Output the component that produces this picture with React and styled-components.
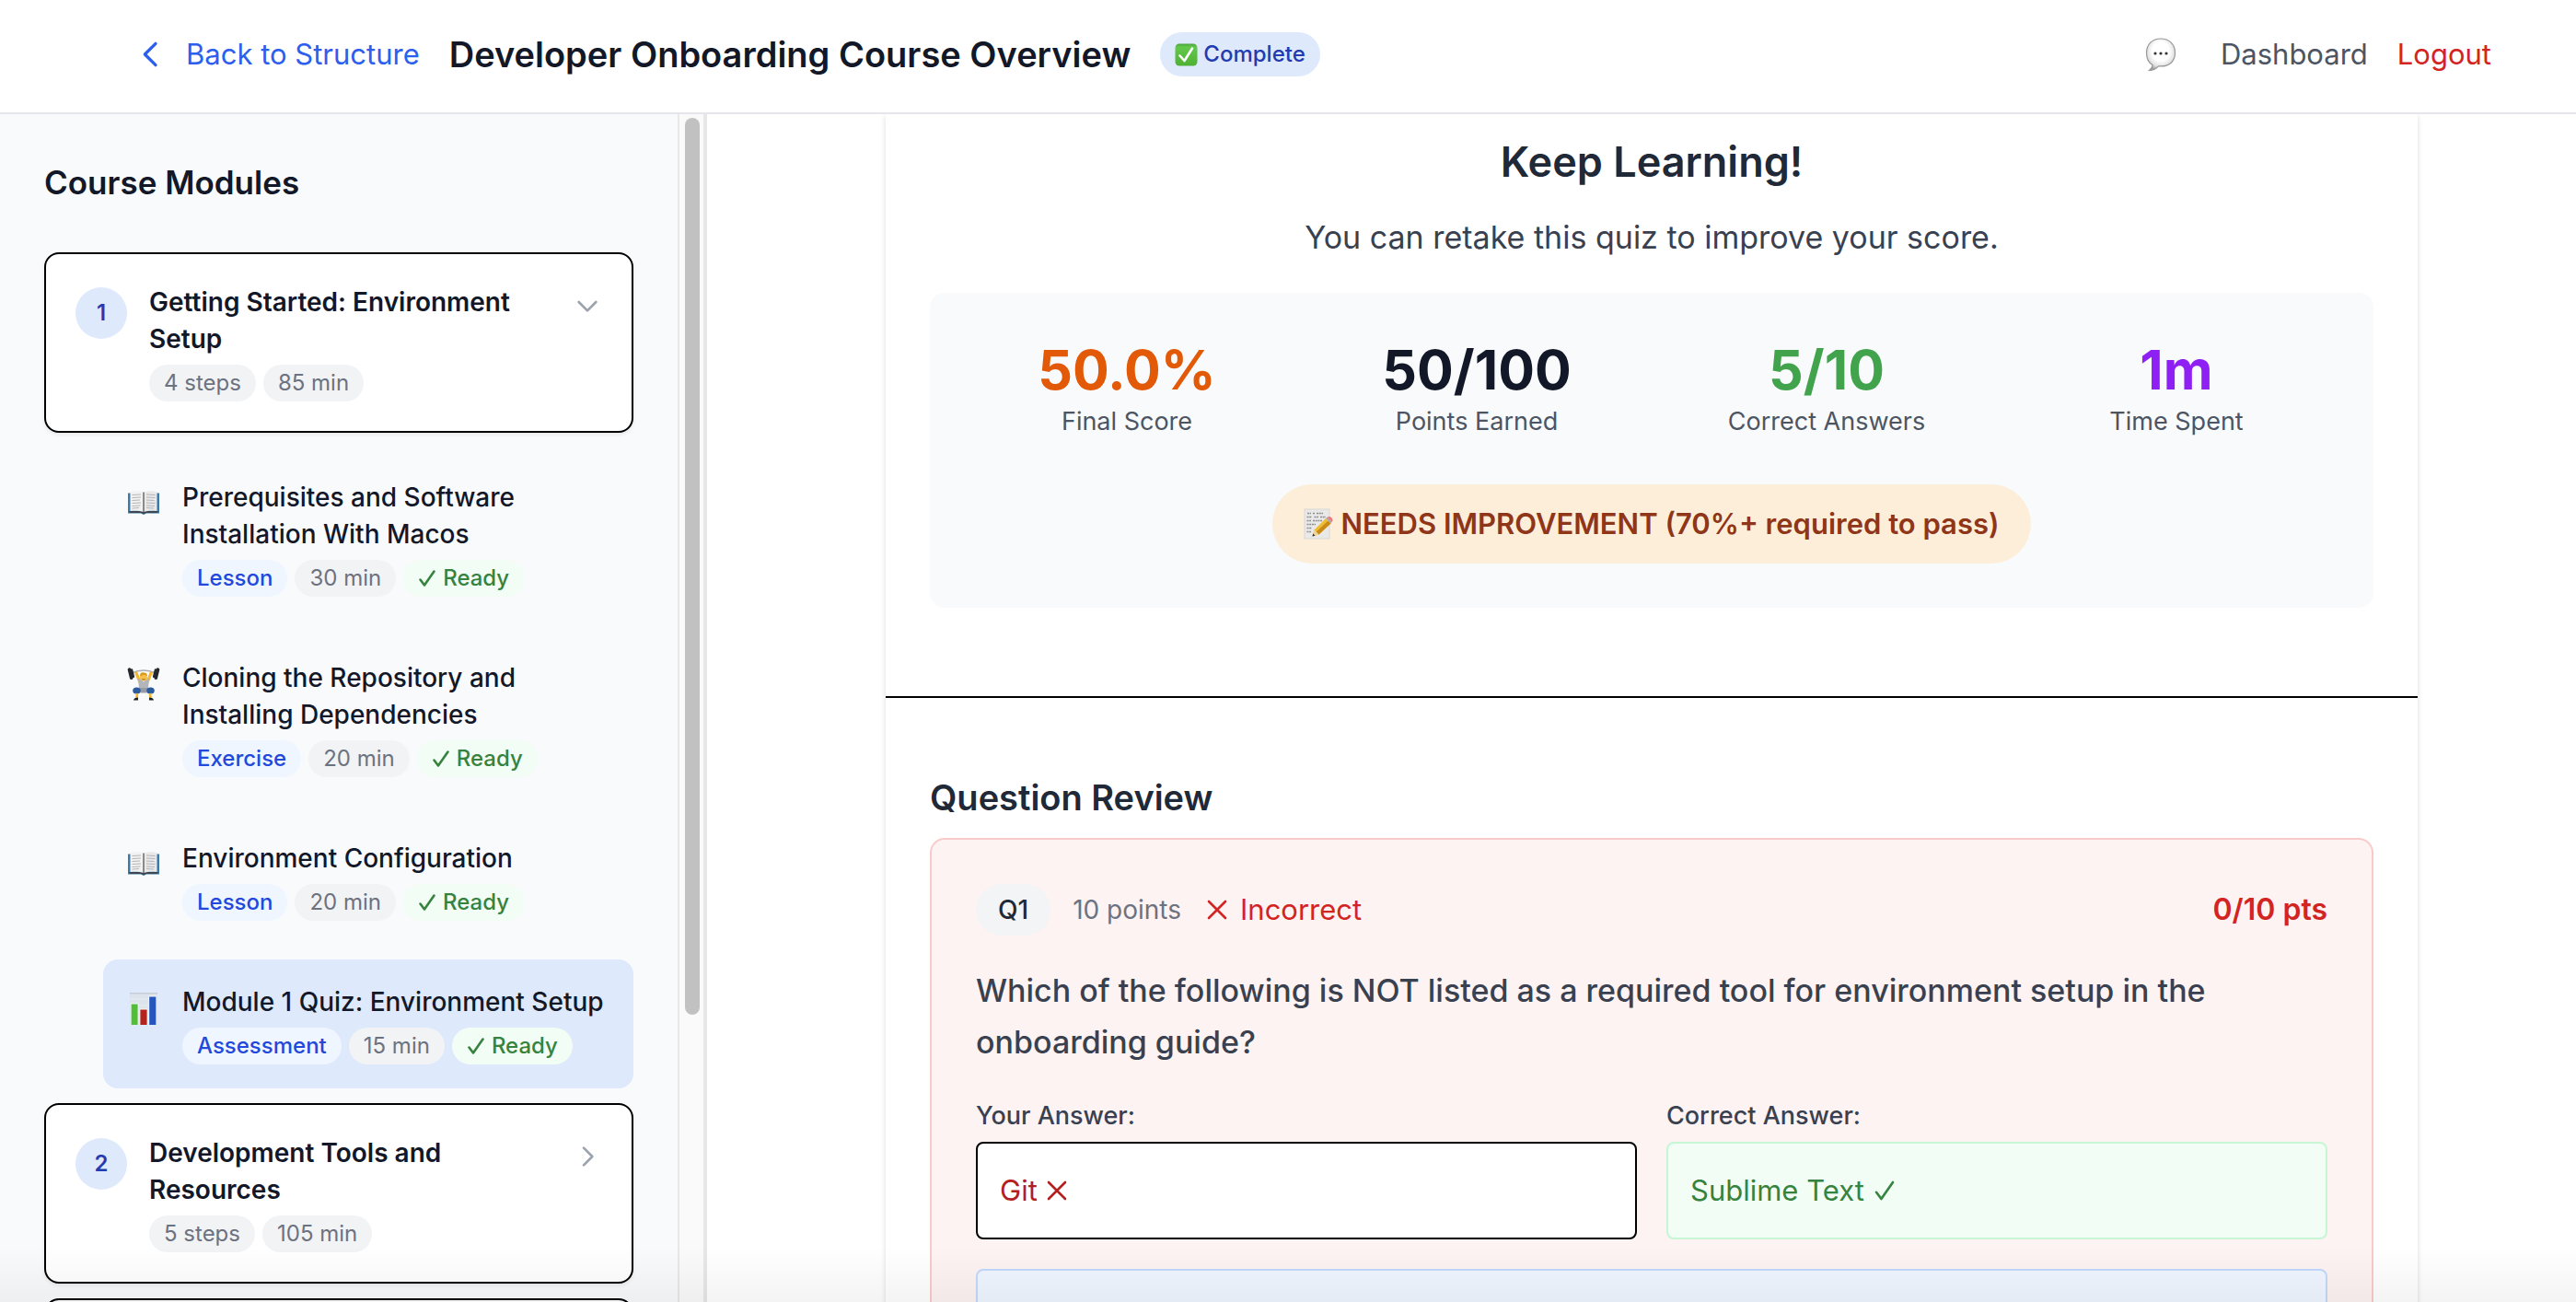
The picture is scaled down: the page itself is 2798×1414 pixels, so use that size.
import React from "react";
import styled, { createGlobalStyle } from "styled-components";

const GlobalStyle = createGlobalStyle`
  *, *::before, *::after { box-sizing: border-box; }
  body { margin: 0; background: #fff; }
  body, button { font-family: Inter, "Liberation Sans", sans-serif; }
  h1, h2, h3, h4, p, ul, ol, dl, dd { margin: 0; padding: 0; }
  ul, ol { list-style: none; }
`;

const c = {
  ink: "#121828",
  heading: "#1f2937",
  body: "#394150",
  soft: "#4c5563",
  muted: "#6c7280",
  faint: "#9ca3af",
  line: "#e5e6eb",
  panel: "#f9fafc",
  chip: "#f2f3f5",
  blue: "#2c5fee",
  blueText: "#2248dc",
  blueDeep: "#223cb0",
  blueBg: "#dee9fc",
  bluePale: "#eff6ff",
  green: "#36833f",
  greenPale: "#f2fdf5",
  red: "#d32424",
};

const Page = styled.div`
  height: 100vh;
  display: flex;
  flex-direction: column;
  overflow: hidden;
  color: ${c.ink};
`;

const Header = styled.header`
  flex: none;
  height: 124px;
  padding: 0 92px 4px 144px;
  display: flex;
  align-items: center;
  justify-content: space-between;
  border-bottom: 2px solid ${c.line};
  background: #fff;
`;

const HeaderGroup = styled.div`
  display: flex;
  align-items: center;
  gap: 32px;
`;

const BackLink = styled.a`
  display: flex;
  align-items: center;
  gap: 18px;
  font-size: 31px;
  line-height: 48px;
  color: ${c.blue};
  text-decoration: none;
`;

const CourseTitle = styled.h1`
  font-size: 38px;
  line-height: 56px;
  font-weight: 600;
`;

const StatusBadge = styled.span`
  display: flex;
  align-items: center;
  gap: 6px;
  padding: 4px 16px;
  border-radius: 24px;
  background: ${c.blueBg};
  color: ${c.blueDeep};
  font-size: 24px;
  line-height: 40px;
  font-weight: 500;
`;

const IconButton = styled.button`
  display: flex;
  padding: 0;
  margin-right: 16px;
  border: 0;
  background: none;
`;

const NavLink = styled.a`
  font-size: 31px;
  line-height: 48px;
  color: ${(p) => (p.$danger ? c.red : c.soft)};
  text-decoration: none;
`;

const Body = styled.div`
  flex: 1;
  min-height: 0;
  display: flex;
`;

const Sidebar = styled.aside`
  flex: none;
  width: 768px;
  display: flex;
  border-right: 4px solid #e7e7e9;
  background: ${c.panel};
`;

const SidebarContent = styled.div`
  flex: 1;
  padding: 48px;
  overflow: hidden;
`;

const ScrollTrack = styled.div`
  flex: none;
  width: 28px;
  padding: 4px 4px 4px 6px;
  border-left: 2px solid #e8e8e8;
  background: #fafafa;
`;

const ScrollThumb = styled.div`
  width: 16px;
  height: 76%;
  border-radius: 8px;
  background: #c1c1c1;
`;

const SidebarTitle = styled.h2`
  margin-bottom: 50px;
  font-size: 35px;
  line-height: 52px;
  font-weight: 600;
`;

const ModuleList = styled.ol`
  display: flex;
  flex-direction: column;
  gap: 16px;
`;

const ModuleButton = styled.button`
  width: 100%;
  display: flex;
  align-items: flex-start;
  gap: 24px;
  padding: 32px;
  border: 2px solid #000;
  border-radius: 16px;
  background: #fff;
  box-shadow: 0 2px 4px rgba(0, 0, 0, 0.08);
  color: inherit;
  text-align: left;
`;

const ModuleNumber = styled.span`
  flex: none;
  width: 56px;
  height: 56px;
  margin-top: 4px;
  border-radius: 50%;
  background: ${c.blueBg};
  color: ${c.blueDeep};
  font-size: 24px;
  line-height: 56px;
  font-weight: 600;
  text-align: center;
`;

const EntryText = styled.span`
  flex: 1;
  min-width: 0;
  display: flex;
  flex-direction: column;
  gap: 8px;
`;

const EntryTitle = styled.span`
  font-size: 28px;
  line-height: 40px;
  font-weight: ${(p) => (p.$strong ? 600 : 500)};
`;

const Chips = styled.span`
  display: flex;
  gap: 8px;
`;

const chipTones = {
  neutral: [c.chip, c.muted, 400],
  kind: [c.bluePale, c.blueText, 500],
  ready: [c.greenPale, c.green, 500],
};

const Chip = styled.span`
  display: flex;
  align-items: center;
  gap: 7px;
  padding: 0 16px;
  border-radius: 20px;
  background: ${(p) => chipTones[p.$tone][0]};
  color: ${(p) => chipTones[p.$tone][1]};
  font-size: 24px;
  line-height: 40px;
  font-weight: ${(p) => chipTones[p.$tone][2]};
`;

const ChevronSlot = styled.span`
  flex: none;
  display: flex;
  margin-top: 8px;
`;

const StepList = styled.ul`
  display: flex;
  flex-direction: column;
  gap: 16px;
  margin-top: 24px;
  padding-left: 64px;
`;

const StepLink = styled.a`
  display: flex;
  align-items: flex-start;
  gap: 24px;
  padding: 26px;
  border-radius: 16px;
  background: ${(p) => (p.$active ? c.blueBg : "transparent")};
  color: inherit;
  text-decoration: none;
`;

const StepIcon = styled.span`
  flex: none;
  display: flex;
  margin-top: 8px;
`;

const Main = styled.main`
  flex: 1;
  min-width: 0;
  padding-left: 22px;
  overflow: hidden;
`;

const QuizCard = styled.article`
  max-width: 1664px;
  margin: 0 auto;
  background: #fff;
  box-shadow: 0 2px 6px rgba(0, 0, 0, 0.14);
`;

const Summary = styled.section`
  padding: 20px 48px 96px;
  border-bottom: 2px solid #000;
`;

const SummaryTitle = styled.h2`
  font-size: 45px;
  line-height: 64px;
  font-weight: 600;
  color: ${c.heading};
  text-align: center;
`;

const SummaryNote = styled.p`
  margin: 22px 0 32px;
  font-size: 34px;
  line-height: 56px;
  color: ${c.body};
  text-align: center;
`;

const ScorePanel = styled.div`
  padding: 48px;
  display: flex;
  flex-direction: column;
  align-items: center;
  gap: 48px;
  border-radius: 16px;
  background: ${c.panel};
`;

const Stats = styled.dl`
  width: 100%;
  display: grid;
  grid-template-columns: repeat(4, 1fr);
  gap: 48px;
  text-align: center;
`;

const Stat = styled.div`
  display: flex;
  flex-direction: column-reverse;
`;

const StatValue = styled.dd`
  font-size: 59px;
  line-height: 72px;
  font-weight: 700;
  color: ${(p) => p.$color};
`;

const StatLabel = styled.dt`
  font-size: 27px;
  line-height: 40px;
  color: ${c.soft};
`;

const Verdict = styled.p`
  display: flex;
  align-items: center;
  gap: 8px;
  padding: 15px 34px;
  border-radius: 43px;
  background: #fdeeda;
  color: #8f3518;
  font-size: 31px;
  line-height: 56px;
  font-weight: 600;
`;

const Review = styled.section`
  padding: 80px 48px 48px;
`;

const ReviewTitle = styled.h3`
  margin-bottom: 16px;
  font-size: 38px;
  line-height: 56px;
  font-weight: 600;
  color: ${c.heading};
`;

const QuestionCard = styled.div`
  padding: 48px;
  display: flex;
  flex-direction: column;
  gap: 32px;
  border: 2px solid #f9caca;
  border-radius: 16px;
  background: #fdf3f2;
`;

const QuestionMeta = styled.div`
  display: flex;
  align-items: center;
  gap: 24px;
  font-size: 28px;
  line-height: 56px;
  color: ${c.muted};
`;

const QuestionNumber = styled.span`
  padding: 0 24px;
  border-radius: 28px;
  background: #f2f4f6;
  color: ${c.heading};
  font-weight: 500;
`;

const Result = styled.span`
  display: flex;
  align-items: center;
  gap: 14px;
  padding-left: 4px;
  font-size: 31px;
  color: ${c.red};
`;

const Points = styled.strong`
  margin-left: auto;
  font-size: 32px;
  font-weight: 600;
  color: ${c.red};
`;

const QuestionText = styled.h4`
  font-size: 34px;
  line-height: 56px;
  font-weight: 500;
  color: ${c.body};
`;

const Answers = styled.dl`
  display: grid;
  grid-template-columns: 1fr 1fr;
  gap: 32px;
`;

const AnswerLabel = styled.dt`
  margin-bottom: 8px;
  font-size: 27px;
  line-height: 40px;
  font-weight: 500;
  color: ${c.body};
`;

const AnswerBox = styled.dd`
  display: flex;
  align-items: center;
  gap: 10px;
  padding: 24px;
  border: 2px solid ${(p) => (p.$correct ? "#c6f6d3" : "#000")};
  border-radius: 8px;
  background: ${(p) => (p.$correct ? c.greenPale : "#fff")};
  color: ${(p) => (p.$correct ? c.green : "#b32020")};
  font-size: 31px;
  line-height: 54px;
`;

const Explanation = styled.div`
  min-height: 160px;
  border: 2px solid #c3d9fb;
  border-radius: 8px;
  background: ${c.bluePale};
`;

const BottomShade = styled.div`
  position: fixed;
  inset: auto 0 0 0;
  height: 60px;
  pointer-events: none;
  background: linear-gradient(to bottom, rgba(0, 0, 0, 0), rgba(0, 0, 0, 0.045));
`;

const Chevron = ({ d, size, color, width = 2 }) => (
  <svg width={size} height={size} viewBox="0 0 24 24" fill="none" stroke={color}
    strokeWidth={width} strokeLinecap="round" strokeLinejoin="round" aria-hidden="true">
    <path d={d} />
  </svg>
);

const Tick = ({ size = 20, weight = 2.6 }) => (
  <svg width={size} height={size} viewBox="0 0 20 20" fill="none" stroke="currentColor"
    strokeWidth={weight} strokeLinecap="round" strokeLinejoin="round" aria-hidden="true">
    <path d="M2.5 11.5L7 17.5L17.5 2.5" />
  </svg>
);

const Cross = () => (
  <svg width="22" height="22" viewBox="0 0 22 22" fill="none" stroke="currentColor"
    strokeWidth="2.6" strokeLinecap="round" aria-hidden="true">
    <path d="M2 2L20 20M20 2L2 20" />
  </svg>
);

const CheckBadgeIcon = () => (
  <svg width="25" height="25" viewBox="0 0 25 25" aria-hidden="true">
    <defs>
      <linearGradient id="tickFill" x1="0" y1="0" x2="0" y2="1">
        <stop offset="0" stopColor="#4aa43c" />
        <stop offset="0.15" stopColor="#63c84a" />
        <stop offset="1" stopColor="#4fb034" />
      </linearGradient>
    </defs>
    <rect x="0.5" y="0.5" width="24" height="24" rx="4.5" fill="url(#tickFill)" />
    <path d="M5.5 13.5L10.5 19L19 5.5" fill="none" stroke="#fff" strokeWidth="2.6"
      strokeLinecap="round" strokeLinejoin="round" />
  </svg>
);

const SpeechIcon = () => (
  <svg width="34" height="38" viewBox="0 0 34 38" aria-hidden="true">
    <defs>
      <radialGradient id="bubbleFill" cx="0.5" cy="0.4" r="0.6">
        <stop offset="0.5" stopColor="#fff" />
        <stop offset="0.8" stopColor="#e2e2e2" />
        <stop offset="1" stopColor="#a0a0a0" />
      </radialGradient>
    </defs>
    <path d="M17 2C8 2 1.500 8 1.500 17.500C1.500 24 4.500 28.500 8 30.500C8 33 6.500 35 4.500 36.500C9 36.500 12.500 34 14.500 31.800C26 33 32.500 26.500 32.500 17.500C32.500 8 26 2 17 2Z"
      fill="url(#bubbleFill)" stroke="#979797" strokeWidth="1.200" />
    <circle cx="11" cy="18" r="1.600" fill="#333" />
    <circle cx="17" cy="18" r="1.600" fill="#333" />
    <circle cx="23" cy="18" r="1.600" fill="#333" />
  </svg>
);

const BookIcon = () => (
  <svg width="36" height="36" viewBox="0 0 36 36" aria-hidden="true">
    <path d="M1 7.500H35V29.500H21L18 31L15 29.500H1Z" fill="#3c78a8" />
    <path d="M2.500 27H33.500V29H20.500L18 30.200L15.500 29H2.500Z" fill="#3d4650" />
    <path d="M3.500 6C9 4.800 15 5 18 7V28C14 26.500 8 26.500 3.500 27Z" fill="#f2f2f2" />
    <path d="M32.500 6C27 4.800 21 5 18 7V28C22 26.500 28 26.500 32.500 27Z" fill="#e9e9ea" />
    <path d="M17 6.500H19V28H17Z" fill="#8b8b8e" />
    <path d="M5.500 9.500L15 9M5.500 12.500L15 12M5.500 15.500L14 15M5.500 18.500L15 18M5.500 21.500L14.500 21M5.500 24L13 23.500M21 9L30.500 9.500M21 12L30.500 12.500M21 15L29.500 15.500M21 18L30.500 18.500M21 21L30 21.500M21 23.500L29 24"
      stroke="#b4b4b6" strokeWidth="1" fill="none" />
  </svg>
);

const LifterIcon = () => (
  <svg width="36" height="38" viewBox="0 0 36 38" aria-hidden="true">
    <path d="M5 7Q18 1 31 7" fill="none" stroke="#a9acb0" strokeWidth="1.400" />
    <path d="M10 7L14 17M26 7L22 17" stroke="#f2b632" strokeWidth="3.200" strokeLinecap="round" />
    <path d="M12 14L15.500 12L18 17L20.500 12L24 14L22.500 27H13.500Z" fill="#b2b5ba" />
    <circle cx="18" cy="11.500" r="3.900" fill="#f6c044" />
    <path d="M14 10.500Q14 5.500 18.500 6.500Q22 6.500 22 10.500Q20 8.500 18 8.800Z" fill="#d99a1c" />
    <path d="M16.500 13.500Q18 15 19.500 13.500" stroke="#9c4d1c" strokeWidth="0.900" fill="none" />
    <path d="M13.500 23H22.500L21.500 28.500H14.500Z" fill="#969ba3" />
    <ellipse cx="10.500" cy="26" rx="4.300" ry="3.600" fill="#2d5c9e" />
    <ellipse cx="25.500" cy="26" rx="4.300" ry="3.600" fill="#2d5c9e" />
    <path d="M11 29L10.500 34M25 29L25.500 34" stroke="#f2b632" strokeWidth="2.600" />
    <path d="M7 36.500Q7.500 33.500 12 33.500V36.500ZM29 36.500Q28.500 33.500 24 33.500V36.500Z" fill="#1d2126" />
    <g fill="#24272b">
      <rect x="1.800" y="1.200" width="3.600" height="13" rx="1.800" transform="rotate(-14 3.600 7.700)" />
      <rect x="4.800" y="2.200" width="2.400" height="10" rx="1.200" transform="rotate(-14 6 7.200)" />
      <rect x="30.600" y="1.200" width="3.600" height="13" rx="1.800" transform="rotate(14 32.400 7.700)" />
      <rect x="28.800" y="2.200" width="2.400" height="10" rx="1.200" transform="rotate(14 30 7.200)" />
    </g>
  </svg>
);

const ChartIcon = () => (
  <svg width="36" height="38" viewBox="0 0 36 38" aria-hidden="true">
    <rect x="3" y="2" width="30" height="35" fill="#dce3ea" />
    <rect x="3" y="2" width="30" height="1.500" fill="#c6ced7" />
    <path d="M3.500 9H32.500M3.500 16H32.500M3.500 23H32.500M3.500 30H32.500" stroke="#e9eef3" strokeWidth="1" />
    <rect x="3.800" y="13.500" width="8.600" height="23.500" fill="#f6f8fa" />
    <rect x="13.600" y="19.500" width="8.800" height="17.500" fill="#f6f8fa" />
    <rect x="23.400" y="5.500" width="8.800" height="31.500" fill="#f6f8fa" />
    <rect x="4.600" y="14.500" width="7" height="22.500" fill="#52bd38" />
    <rect x="14.400" y="20.500" width="7.200" height="16.500" fill="#b2241d" />
    <rect x="24.200" y="6.500" width="7.200" height="30.500" fill="#2456bd" />
  </svg>
);

const MemoIcon = () => (
  <svg width="32" height="34" viewBox="0 0 32 34" aria-hidden="true">
    <rect x="1" y="1" width="27" height="32" fill="#e9e9ea" stroke="#d2d2d0" strokeWidth="0.800" />
    <path d="M4 5.500H8M10 5.500H12M14 5.500H21M3.500 9.500H9M11.500 9.500H16M18 9.500H24M3.500 13.500H8M10 13.500H20M3.500 17.500H13M3.500 21.500H9M3.500 25.500H8"
      stroke="#8b8b8d" strokeWidth="1.500" strokeDasharray="2 0.700" />
    <path d="M9.500 30.500L11.500 23.500L24 11L29.500 16.500L16.500 28.500Z" fill="#f0bd30" />
    <path d="M13.500 25.800L26.500 13.500L29.500 16.500L16.500 28.500Z" fill="#c98a18" />
    <path d="M9.500 30.500L11.500 23.500L16.500 28.500Z" fill="#efd3a0" />
    <path d="M9.500 30.500L10.300 27.600L12.400 29.700Z" fill="#2a2a2a" />
    <path d="M24 11L25.500 9.800L30.500 15L29.500 16.500Z" fill="#a8acb0" />
    <path d="M25.500 9.800Q28 8 30.500 10.500Q32.500 13 30.500 15Z" fill="#ea7a80" />
  </svg>
);

const stepIcons = { Lesson: BookIcon, Exercise: LifterIcon, Assessment: ChartIcon };

const modules = [
  {
    title: "Getting Started: Environment Setup",
    steps: "4 steps",
    time: "85 min",
    open: true,
    items: [
      { title: "Prerequisites and Software Installation With Macos", kind: "Lesson", time: "30 min" },
      { title: "Cloning the Repository and Installing Dependencies", kind: "Exercise", time: "20 min" },
      { title: "Environment Configuration", kind: "Lesson", time: "20 min" },
      { title: "Module 1 Quiz: Environment Setup", kind: "Assessment", time: "15 min", active: true },
    ],
  },
  { title: "Development Tools and Resources", steps: "5 steps", time: "105 min", items: [] },
];

const stats = [
  { value: "50.0%", label: "Final Score", color: "#e25a08" },
  { value: "50/100", label: "Points Earned", color: c.ink },
  { value: "5/10", label: "Correct Answers", color: "#41a34b" },
  { value: "1m", label: "Time Spent", color: "#8f20f3" },
];

const Step = ({ step }) => {
  const Icon = stepIcons[step.kind];
  return (
    <li>
      <StepLink href="#" $active={step.active}>
        <StepIcon><Icon /></StepIcon>
        <EntryText>
          <EntryTitle>{step.title}</EntryTitle>
          <Chips>
            <Chip $tone="kind">{step.kind}</Chip>
            <Chip $tone="neutral">{step.time}</Chip>
            <Chip $tone="ready"><Tick />Ready</Chip>
          </Chips>
        </EntryText>
      </StepLink>
    </li>
  );
};

const Module = ({ module, number }) => (
  <li>
    <ModuleButton type="button" aria-expanded={Boolean(module.open)}>
      <ModuleNumber>{number}</ModuleNumber>
      <EntryText>
        <EntryTitle $strong>{module.title}</EntryTitle>
        <Chips>
          <Chip $tone="neutral">{module.steps}</Chip>
          <Chip $tone="neutral">{module.time}</Chip>
        </Chips>
      </EntryText>
      <ChevronSlot>
        <Chevron size={32} color={c.faint} d={module.open ? "M19 9l-7 7-7-7" : "M9 5l7 7-7 7"} />
      </ChevronSlot>
    </ModuleButton>
    {module.open && (
      <StepList>
        {module.items.map((step) => <Step key={step.title} step={step} />)}
      </StepList>
    )}
  </li>
);

export default function App() {
  return (
    <Page>
      <GlobalStyle />
      <Header>
        <HeaderGroup>
          <BackLink href="#">
            <Chevron size={40} color={c.blue} d="M15 19l-7-7 7-7" />
            Back to Structure
          </BackLink>
          <CourseTitle>Developer Onboarding Course Overview</CourseTitle>
          <StatusBadge><CheckBadgeIcon />Complete</StatusBadge>
        </HeaderGroup>
        <HeaderGroup as="nav">
          <IconButton type="button" aria-label="Messages"><SpeechIcon /></IconButton>
          <NavLink href="#">Dashboard</NavLink>
          <NavLink href="#" $danger>Logout</NavLink>
        </HeaderGroup>
      </Header>
      <Body>
        <Sidebar>
          <SidebarContent>
            <SidebarTitle>Course Modules</SidebarTitle>
            <ModuleList>
              {modules.map((m, i) => <Module key={m.title} module={m} number={i + 1} />)}
              <li><ModuleButton type="button" aria-label="Next module" /></li>
            </ModuleList>
          </SidebarContent>
          <ScrollTrack><ScrollThumb /></ScrollTrack>
        </Sidebar>
        <Main>
          <QuizCard>
            <Summary>
              <SummaryTitle>Keep Learning!</SummaryTitle>
              <SummaryNote>You can retake this quiz to improve your score.</SummaryNote>
              <ScorePanel>
                <Stats>
                  {stats.map((s) => (
                    <Stat key={s.label}>
                      <StatLabel>{s.label}</StatLabel>
                      <StatValue $color={s.color}>{s.value}</StatValue>
                    </Stat>
                  ))}
                </Stats>
                <Verdict><MemoIcon />NEEDS IMPROVEMENT (70%+ required to pass)</Verdict>
              </ScorePanel>
            </Summary>
            <Review>
              <ReviewTitle>Question Review</ReviewTitle>
              <QuestionCard>
                <QuestionMeta>
                  <QuestionNumber>Q1</QuestionNumber>
                  <span>10 points</span>
                  <Result><Cross />Incorrect</Result>
                  <Points>0/10 pts</Points>
                </QuestionMeta>
                <QuestionText>
                  Which of the following is NOT listed as a required tool for environment setup in the onboarding guide?
                </QuestionText>
                <Answers>
                  <div>
                    <AnswerLabel>Your Answer:</AnswerLabel>
                    <AnswerBox>Git<Cross /></AnswerBox>
                  </div>
                  <div>
                    <AnswerLabel>Correct Answer:</AnswerLabel>
                    <AnswerBox $correct>Sublime Text<Tick size={24} weight={2.2} /></AnswerBox>
                  </div>
                </Answers>
                <Explanation />
              </QuestionCard>
            </Review>
          </QuizCard>
        </Main>
      </Body>
      <BottomShade />
    </Page>
  );
}
